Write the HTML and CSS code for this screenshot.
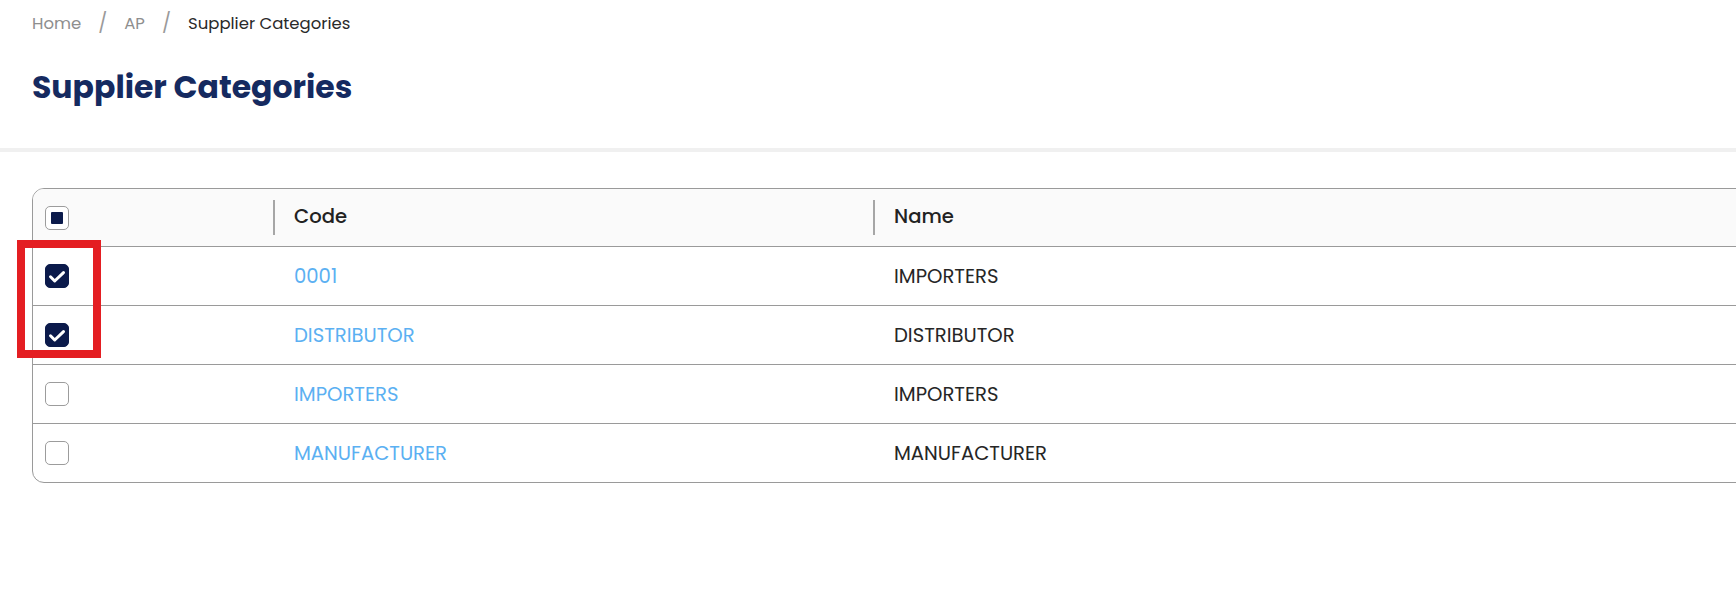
FILE: index.html
```html
<!DOCTYPE html>
<html lang="en">
<head>
<meta charset="utf-8">
<title>Supplier Categories</title>
<link rel="stylesheet" href="styles.css">
</head>
<body>
<header class="page-head">
  <nav class="crumbs">
    <span class="crumb">Home</span>
    <span class="sep">/</span>
    <span class="crumb">AP</span>
    <span class="sep">/</span>
    <span class="crumb current">Supplier Categories</span>
  </nav>
  <h1 class="title">Supplier Categories</h1>
</header>
<main class="content">
  <div class="table">
    <div class="row head">
      <div class="cell sel"><span class="cb partial"><span class="dot"></span></span></div>
      <div class="cell hcell">Code</div>
      <div class="cell hcell">Name</div>
    </div>
    <div class="row">
      <div class="cell sel"><span class="cb on"><svg viewBox="0 0 24 24"><path d="M5.5 12.8l4.2 4.2L18.5 8.6"/></svg></span></div>
      <div class="cell"><a class="link">0001</a></div>
      <div class="cell">IMPORTERS</div>
    </div>
    <div class="row">
      <div class="cell sel"><span class="cb on"><svg viewBox="0 0 24 24"><path d="M5.5 12.8l4.2 4.2L18.5 8.6"/></svg></span></div>
      <div class="cell"><a class="link">DISTRIBUTOR</a></div>
      <div class="cell">DISTRIBUTOR</div>
    </div>
    <div class="row">
      <div class="cell sel"><span class="cb"></span></div>
      <div class="cell"><a class="link">IMPORTERS</a></div>
      <div class="cell">IMPORTERS</div>
    </div>
    <div class="row last">
      <div class="cell sel"><span class="cb"></span></div>
      <div class="cell"><a class="link">MANUFACTURER</a></div>
      <div class="cell">MANUFACTURER</div>
    </div>
  </div>
</main>
<div class="highlight"></div>
</body>
</html>
```

FILE: styles.css
```css
html, body {
  margin: 0;
  padding: 0;
  background: #ffffff;
  overflow: hidden;
}
body {
  position: relative;
  font-family: "Poppins", "Inter", "Noto Sans", sans-serif;
  color: #222222;
  width: 1736px;
  height: 602px;
}
.page-head {
  padding: 12px 32px 41px;
  border-bottom: 4px solid #f0f0f0;
}
.crumbs {
  display: flex;
  align-items: center;
  height: 24px;
  font-size: 16.5px;
  line-height: 24px;
}
.crumb { color: #8e8e8e; }
.crumb.current { color: #2a2a2a; }
.sep {
  color: #9a9a9a;
  margin: 0 17px;
  font-size: 19px;
}
.title {
  margin: 31px 0 0;
  font-size: 31.5px;
  line-height: 40px;
  font-weight: 700;
  color: #152a60;
}
.content {
  padding: 36px 0 0 32px;
}
.table {
  width: 1800px;
  border: 1px solid #9a9a9a;
  border-radius: 12px;
  overflow: hidden;
}
.row {
  display: grid;
  grid-template-columns: 240px 600px 1fr;
  height: 58px;
  border-bottom: 1px solid #9a9a9a;
  font-size: 19.6px;
}
.row.head {
  height: 57px;
  background: #fafafa;
}
.row.last { border-bottom: none; }
.cell {
  display: flex;
  align-items: center;
  padding-left: 21px;
  color: #262626;
}
.cell.sel { padding-left: 12px; }
.hcell {
  position: relative;
  font-weight: 500;
  color: #222;
  padding-bottom: 3px;
}
.hcell::before {
  content: "";
  position: absolute;
  left: 0;
  top: 11px;
  width: 2px;
  height: 35px;
  background: #a6a6a6;
}
.link {
  color: #5bb0f2;
  text-decoration: none;
}
.cb {
  box-sizing: border-box;
  width: 24px;
  height: 24px;
  border: 1px solid #9c9c9c;
  border-radius: 5px;
  background: #fff;
  display: flex;
  align-items: center;
  justify-content: center;
}
.cb.on {
  border-color: #0b1a4b;
  background: #0b1a4b;
}
.cb svg {
  width: 24px;
  height: 24px;
  flex: none;
  fill: none;
  stroke: #ffffff;
  stroke-width: 3;
  stroke-linecap: round;
  stroke-linejoin: round;
}
.cb .dot {
  width: 12px;
  height: 12px;
  background: #0b1a4b;
  border-radius: 1px;
}
.highlight {
  position: absolute;
  left: 17px;
  top: 240px;
  width: 84px;
  height: 118px;
  box-sizing: border-box;
  border: 8px solid #e41e22;
}
```
